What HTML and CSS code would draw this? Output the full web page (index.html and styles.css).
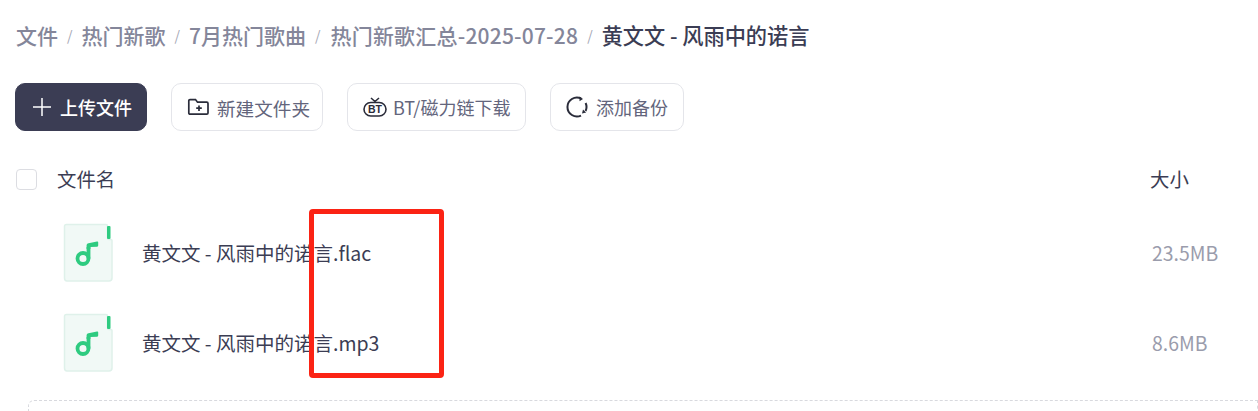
FILE: index.html
```html
<!DOCTYPE html>
<html lang="zh">
<head>
<meta charset="utf-8">
<title>文件</title>
<link rel="stylesheet" href="styles.css">
</head>
<body>
<div class="page">
  <nav class="crumbs">
    <span class="crumb">文件</span><span class="sep">/</span>
    <span class="crumb">热门新歌</span><span class="sep">/</span>
    <span class="crumb">7月热门歌曲</span><span class="sep">/</span>
    <span class="crumb crumb-date">热门新歌汇总-2025-07-28</span><span class="sep">/</span>
    <span class="crumb current">黄文文 - 风雨中的诺言</span>
  </nav>
  <div class="toolbar">
    <button class="btn primary">
      <svg width="18" height="18" viewBox="0 0 18 18"><path d="M9 0v18M0 9h18" stroke="#fff" stroke-width="1.500" fill="none"/></svg>
      <span>上传文件</span>
    </button>
    <button class="btn new-folder">
      <svg width="22" height="18" viewBox="0 0 22 18" fill="none" stroke="#2a2c3a" stroke-width="1.700"><path d="M1.800 15V2.800c0-.7.5-1.200 1.200-1.200h5.500l2 2.600h9.300c.7 0 1.200.5 1.200 1.200V15c0 .7-.5 1.200-1.200 1.200H3c-.7 0-1.200-.5-1.200-1.200z"/><path d="M12 7.500v5.500M9.200 10.200h5.600"/></svg>
      <span>新建文件夹</span>
    </button>
    <button class="btn bt">
      <svg width="24" height="20" viewBox="0 0 24 20" fill="none" stroke="#2a2c3a" stroke-width="1.600"><path d="M8 1l4 3.500L16 1M12 4.500V6"/><rect x="1" y="5.500" width="22" height="13.500" rx="6.750"/><text class="bt-mark" x="12" y="16" text-anchor="middle">BT</text></svg>
      <span>BT/磁力链下载</span>
    </button>
    <button class="btn backup">
      <svg width="22" height="22" viewBox="0 0 22 22" fill="none" stroke="#2a2c3a" stroke-width="2"><path d="M15 2.400A9.500 9.500 0 1 0 15 19.600"/><path d="M19.600 7A9.500 9.500 0 0 1 19.600 15"/><path d="M13.500 0.500l3.500 2.500-3.500 2.200z" fill="#2a2c3a" stroke="none"/><path d="M16 17.500l1-4 3.200 3z" fill="#2a2c3a" stroke="none"/></svg>
      <span>添加备份</span>
    </button>
  </div>
  <div class="head-row">
    <span class="checkbox"></span>
    <span class="name-head">文件名</span>
    <span class="size-head">大小</span>
  </div>
  <div class="file-row">
    <svg width="50" height="60" viewBox="0 0 50 60"><use href="#music"/></svg>
    <span class="file-name">黄文文 - 风雨中的诺言.flac</span>
    <span class="file-size">23.5MB</span>
  </div>
  <div class="file-row">
    <svg width="50" height="60" viewBox="0 0 50 60"><use href="#music"/></svg>
    <span class="file-name">黄文文 - 风雨中的诺言.mp3</span>
    <span class="file-size">8.6MB</span>
  </div>
  <div class="dashed"></div>
  <div class="annotation"></div>
</div>
<svg class="defs" width="0" height="0">
  <defs>
    <g id="music">
      <path d="M3.500 1.500H43c1 0 1.500.5 1.500 1.500v12c0 1 .5 1.500 1.500 1.500h2c.5 0 1 .5 1 1V55c0 2-1 3-3 3H4c-1.500 0-2.500-1-2.500-3V3.500c0-1.300.7-2 2-2z" fill="#f1f9f6" stroke="#dff1ea" stroke-width="1.500"/>
      <rect x="44" y="3" width="3.500" height="13" rx="1" fill="#2ecb80"/>
      <circle cx="20" cy="35.500" r="5.500" fill="none" stroke="#2ecb80" stroke-width="3.800"/>
      <path d="M25.500 35.500V24" fill="none" stroke="#2ecb80" stroke-width="3.800"/>
      <path d="M23.600 26v-3.500c0-1.300.7-2 1.900-2.300l8.500-1.700c.7-.1 1.200.3 1.200 1v3c0 .7-.4 1.100-1 1.200L27.400 24v2z" fill="#2ecb80"/>
    </g>
  </defs>
</svg>
</body>
</html>
```
FILE: styles.css
```css
* { box-sizing: border-box; }
html, body { margin: 0; padding: 0; background: #fff; overflow: hidden; }
body { width: 1258px; height: 411px; font-family: "Noto Sans CJK SC", "Noto Sans", sans-serif; color: #3b3d54; }
.page { position: relative; width: 1258px; height: 411px; padding: 19px 0 0 16px; overflow: hidden; }
.crumbs { display: flex; align-items: center; height: 32px; font-size: 21px; font-weight: 500; color: #84869a; line-height: 32px; }
.crumb { white-space: nowrap; }
.crumb-date { letter-spacing: .2px; margin-left: 1px; }
.current { color: #3b3d54; font-size: 21.2px; }
.sep { margin: 0 9px; font-size: 14px; font-weight: 400; color: #a5a7b5; }
.toolbar { display: flex; gap: 24px; margin: 32px 0 0 -1px; }
.btn { display: flex; align-items: center; height: 48px; border: 1px solid #e4e5ea; border-radius: 10px; background: #fff; color: #63657c; font: 400 18px "Noto Sans CJK SC", "Noto Sans", sans-serif; padding: 0; white-space: nowrap; }
.primary { width: 132px; background: #3b3d54; border-color: #3b3d54; color: #fff; font-weight: 500; padding-left: 17px; gap: 9px; }
.new-folder { width: 152px; padding-left: 15px; gap: 8px; font-size: 18.6px; }
.bt { width: 179px; padding-left: 15px; gap: 6px; }
.backup { width: 134px; padding-left: 15px; gap: 8px; }
.bt-mark { font: 700 10.5px "Liberation Sans", sans-serif; fill: #2a2c3a; stroke: none; }
.head-row { position: relative; display: flex; align-items: center; height: 28px; margin-top: 34px; }
.checkbox { width: 21px; height: 21px; border: 1px solid #dcdde2; border-radius: 4px; }
.name-head { margin: -2px 0 0 20px; font-size: 19.4px; color: #3b3d54; }
.size-head { margin: -2px 0 0 auto; width: 108px; font-size: 19.4px; color: #3b3d54; }
.file-row { display: flex; align-items: center; height: 90px; margin-left: 47px; }
.head-row + .file-row { margin-top: 15px; }
.file-name { margin: -2px 0 0 29px; font-size: 19.5px; color: #3b3d54; white-space: nowrap; }
.file-size { margin: -2px 0 0 auto; width: 106px; font-size: 19.4px; color: #9a9cac; }
.dashed { height: 20px; margin: 12px 0 0 12px; border: 1px dashed #d8d9de; border-radius: 6px 0 0 0; width: 1230px; }
.annotation { position: absolute; left: 309px; top: 209px; width: 135px; height: 169px; border: 5px solid #fb2314; border-radius: 4px; }
.defs { position: absolute; }
```
